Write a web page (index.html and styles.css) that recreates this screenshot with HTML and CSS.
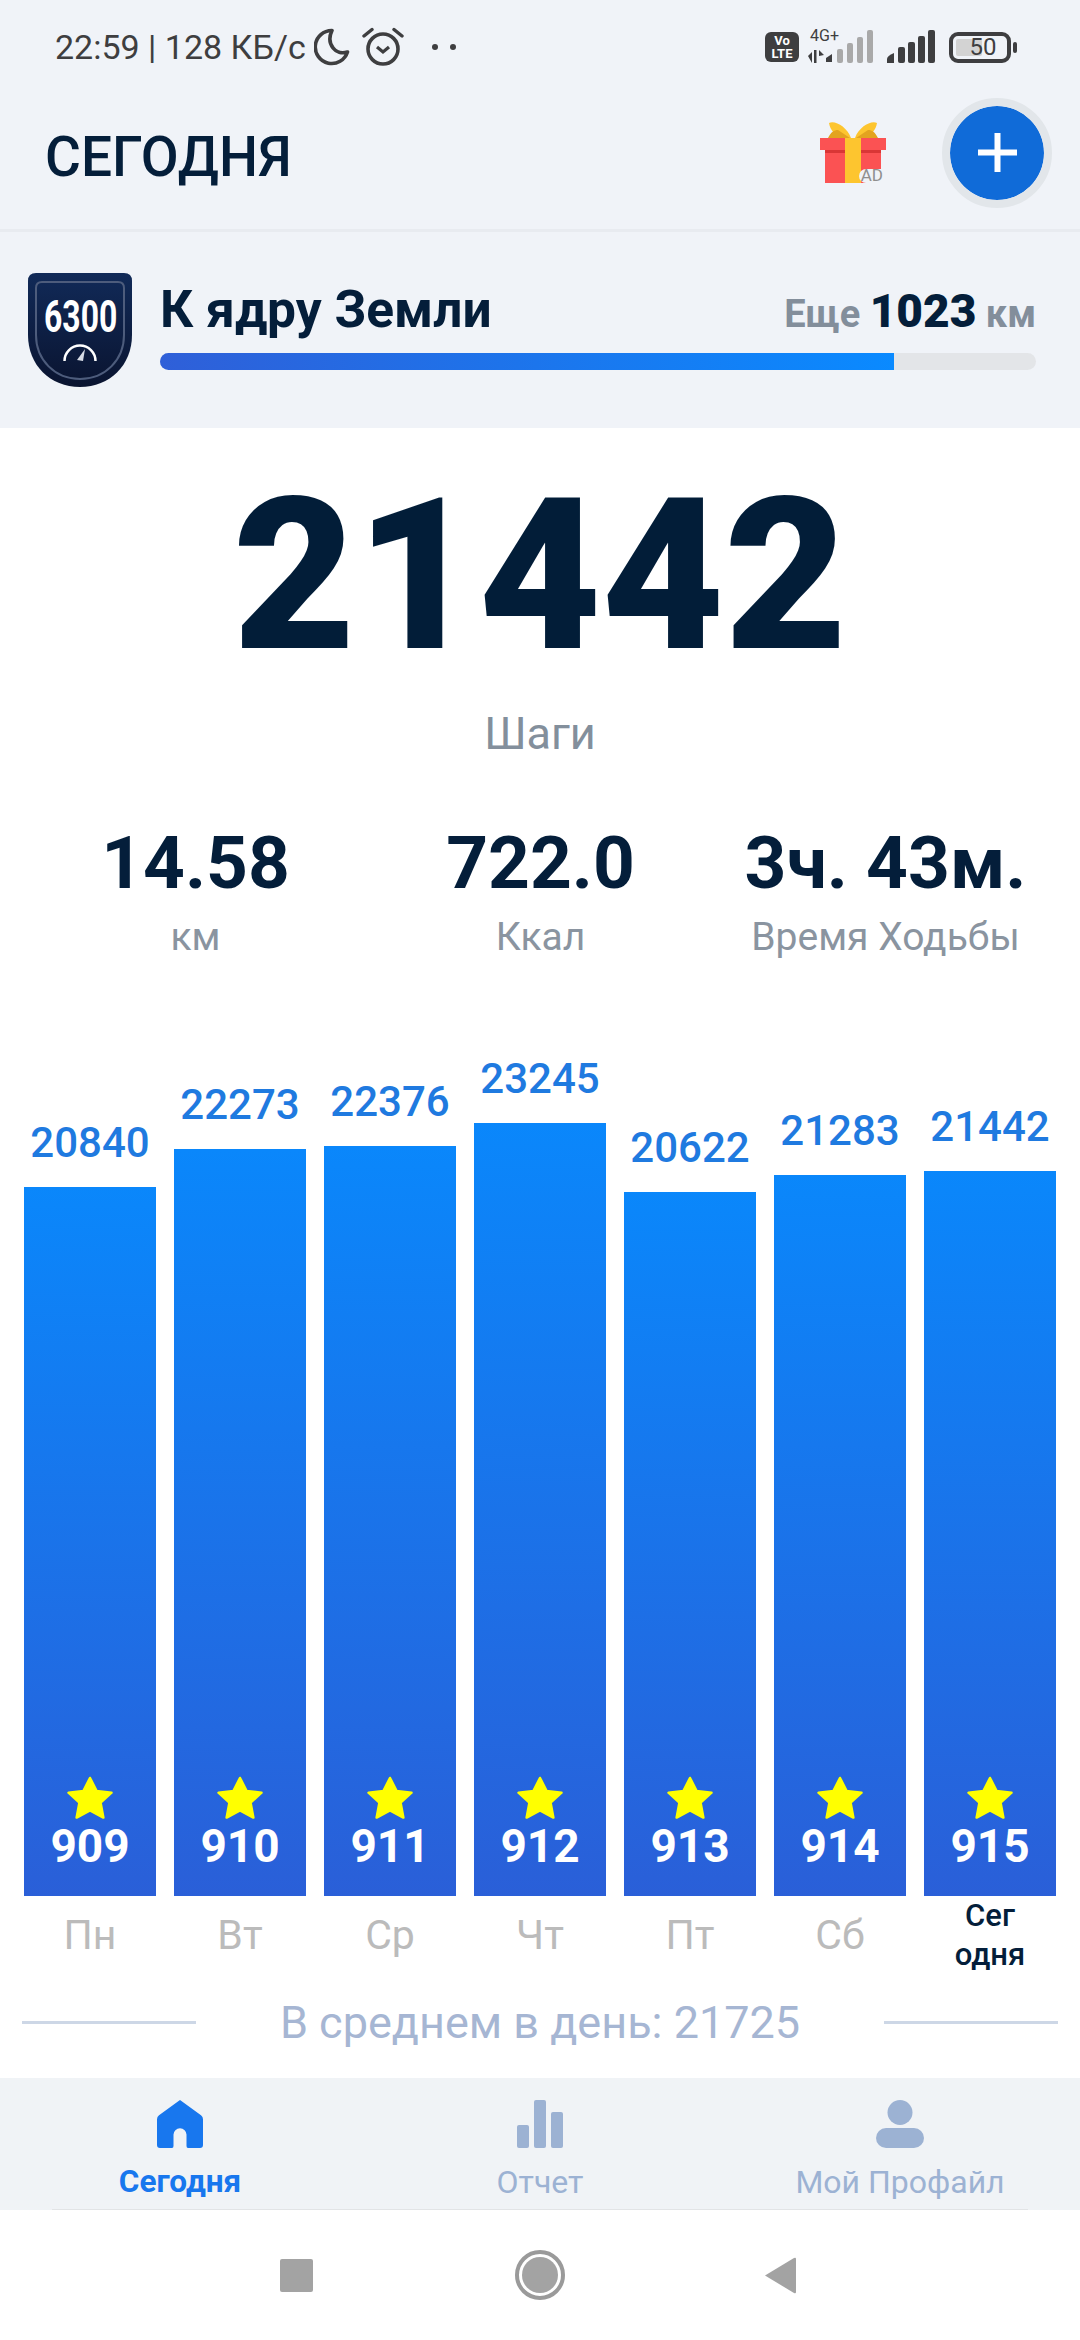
FILE: index.html
```html
<!DOCTYPE html>
<html lang="ru">
<head>
  <meta charset="UTF-8">
  <title>Сегодня</title>
  <link rel="stylesheet" href="styles.css">
</head>
<body>

<svg class="defs" width="0" height="0">
  <symbol id="star" viewBox="0 0 48 46" preserveAspectRatio="none">
    <polygon points="24,2 30.5,15.5 45.5,17.5 34.6,27.8 37.4,43.5 24,36 10.6,43.5 13.4,27.8 2.5,17.5 17.5,15.5" fill="#ffff00" stroke="#ffff00" stroke-width="2.5" stroke-linejoin="round"/>
  </symbol>
</svg>

<section class="top">
  <div class="status">
    <span class="status-text">22:59 | 128 КБ/с</span>
    <svg class="ic-moon" width="36" height="38" viewBox="0 0 36 38"><path d="M18 2.500A16.500 16.500 0 1 0 33.500 24C22 28 11.500 16 18 2.500Z" fill="none" stroke="#3e3e40" stroke-width="3.600" stroke-linejoin="round"/></svg>
    <svg class="ic-alarm" width="42" height="40" viewBox="0 0 42 40">
      <circle cx="21" cy="22" r="15" fill="none" stroke="#3e3e40" stroke-width="3.600"/>
      <path d="M15 20l6 5 6-5" fill="none" stroke="#3e3e40" stroke-width="3.200"/>
      <path d="M2 9l8-6.500M40 9l-8-6.500" fill="none" stroke="#3e3e40" stroke-width="3.400" stroke-linecap="round"/>
    </svg>
    <span class="dots"><i></i><i></i></span>
    <div class="status-right">
      <span class="volte">Vo<br>LTE</span>
      <svg class="ic-net" width="70" height="38" viewBox="0 -4 70 38">
        <text x="2" y="12" class="net-text">4G+</text>
        <path d="M0 27l4-4v11zM6 21h2.500v13H6zM11 21l5 5-5 1z" fill="#3e3e40"/>
        <path d="M18 33v-4l6-4v8z" fill="#3e3e40"/>
        <rect x="29" y="20" width="6" height="14" rx="2" fill="#a9a9a9"/>
        <rect x="39" y="14" width="6" height="20" rx="2" fill="#a9a9a9"/>
        <rect x="49" y="8" width="6" height="26" rx="2" fill="#a9a9a9"/>
        <rect x="59" y="1" width="6" height="33" rx="2" fill="#a9a9a9"/>
      </svg>
      <svg class="ic-signal" width="48" height="33" viewBox="0 0 48 33">
        <path d="M0 33v-4q0-3 7-6v10z" fill="#3e3e40"/>
        <rect x="11" y="17" width="7" height="16" rx="2" fill="#3e3e40"/>
        <rect x="21" y="12" width="7" height="21" rx="2" fill="#3e3e40"/>
        <rect x="31" y="6" width="7" height="27" rx="2" fill="#3e3e40"/>
        <rect x="41" y="0" width="7" height="33" rx="2" fill="#3e3e40"/>
      </svg>
      <span class="battery"><span class="battery-level"></span><span class="battery-num">50</span></span>
      <span class="battery-nub"></span>
    </div>
  </div>

  <header class="head">
    <h1>СЕГОДНЯ</h1>
    <span class="gift">
      <svg width="66" height="62" viewBox="0 0 66 62">
        <path d="M24 17C15 15 10 9 9 2c6-3 18 4 22 15zM42 17c9-2 14-8 15-15-6-3-18 4-22 15z" fill="#fdc52f"/>
        <path d="M8 17c3-6 6-8 10-8l12 8zM58 17c-3-6-6-8-10-8l-12 8z" fill="#e3a31f"/>
        <rect x="0" y="17" width="66" height="12" fill="#fb5253"/>
        <rect x="5" y="29" width="56" height="33" fill="#fb5253"/>
        <rect x="5" y="29" width="56" height="3" fill="#d93636"/>
        <rect x="25" y="17" width="16" height="45" fill="#fdc52f"/>
        <path d="M66 48H46a7 7 0 0 0 0 14H66z" fill="#f0f3f8"/>
      </svg>
      <span class="gift-ad">AD</span>
    </span>
    <button class="add"><svg width="39" height="39" viewBox="0 0 39 39"><path d="M19.500 0v39M0 19.500h39" stroke="#fff" stroke-width="6"/></svg></button>
  </header>

  <div class="goal">
    <svg class="badge" width="104" height="114" viewBox="0 0 104 114">
      <defs>
        <linearGradient id="badgefill" x1="0" y1="0" x2="0" y2="1">
          <stop offset="0" stop-color="#112a58"/>
          <stop offset="1" stop-color="#0a1430"/>
        </linearGradient>
      </defs>
      <path d="M8 0H96Q104 0 104 8V62C104 92 82 114 52 114S0 92 0 62V8Q0 0 8 0Z" fill="url(#badgefill)"/>
      <path d="M14 9H90Q96 9 96 15V62C96 87 77 106 52 106S8 87 8 62V15Q8 9 14 9Z" fill="none" stroke="#4d5c7c" stroke-width="2"/>
      <text transform="translate(16 59) scale(.71 1)" class="badge-num">6300</text>
      <path d="M36.500 88a15.500 15.500 0 0 1 31 0" fill="none" stroke="#fff" stroke-width="2.500"/>
      <path d="M49 87l8-11-2 12z" fill="#d8dde6"/>
    </svg>
    <div class="goal-main">
      <div class="goal-row">
        <span class="goal-title">К ядру Земли</span>
        <span class="goal-left">Еще <b>1023</b> км</span>
      </div>
      <div class="track"><div class="fill"></div></div>
    </div>
  </div>
</section>

<section class="hero">
  <div class="steps">21442</div>
  <div class="steps-label">Шаги</div>
</section>

<section class="stats">
  <div class="stat"><b>14.58</b><span>км</span></div>
  <div class="stat"><b>722.0</b><span>Ккал</span></div>
  <div class="stat"><b>3ч. 43м.</b><span>Время Ходьбы</span></div>
</section>

<section class="chart">
  <div class="col"><div class="val">20840</div><div class="bar" style="height:709px"><svg class="star"><use href="#star"/></svg><div class="num">909</div></div></div>
  <div class="col"><div class="val">22273</div><div class="bar" style="height:747px"><svg class="star"><use href="#star"/></svg><div class="num">910</div></div></div>
  <div class="col"><div class="val">22376</div><div class="bar" style="height:750px"><svg class="star"><use href="#star"/></svg><div class="num">911</div></div></div>
  <div class="col"><div class="val">23245</div><div class="bar" style="height:773px"><svg class="star"><use href="#star"/></svg><div class="num">912</div></div></div>
  <div class="col"><div class="val">20622</div><div class="bar" style="height:704px"><svg class="star"><use href="#star"/></svg><div class="num">913</div></div></div>
  <div class="col"><div class="val">21283</div><div class="bar" style="height:721px"><svg class="star"><use href="#star"/></svg><div class="num">914</div></div></div>
  <div class="col"><div class="val">21442</div><div class="bar" style="height:725px"><svg class="star"><use href="#star"/></svg><div class="num">915</div></div></div>
</section>

<section class="days">
  <div>Пн</div><div>Вт</div><div>Ср</div><div>Чт</div><div>Пт</div><div>Сб</div>
  <div class="today">Сег<br>одня</div>
</section>

<section class="avg">
  <i></i><span>В среднем в день: 21725</span><i></i>
</section>

<nav class="tabs">
  <a class="tab active">
    <svg width="46" height="48" viewBox="0 0 46 50" preserveAspectRatio="none"><path d="M23 0l21 16q2 1.500 2 4v27q0 3-3 3H31q-1.500 0-1.500-2V36a6.500 6.500 0 0 0-13 0v12q0 2-1.500 2H3q-3 0-3-3V20q0-2.500 2-4z" fill="#1877ee"/></svg>
    <span>Сегодня</span>
  </a>
  <a class="tab">
    <svg width="46" height="48" viewBox="0 0 46 48"><rect x="0" y="25" width="12" height="23" rx="2" fill="#9cb2d3"/><rect x="17" y="0" width="12" height="48" rx="2" fill="#9cb2d3"/><rect x="34" y="12" width="12" height="36" rx="2" fill="#9cb2d3"/></svg>
    <span>Отчет</span>
  </a>
  <a class="tab">
    <svg width="48" height="48" viewBox="0 0 48 48"><circle cx="24" cy="12.500" r="12.500" fill="#9cb2d3"/><rect x="0" y="28" width="48" height="20" rx="10" fill="#9cb2d3"/></svg>
    <span>Мой Профайл</span>
  </a>
</nav>

<footer class="sysnav">
  <svg class="sys-square" width="33" height="33" viewBox="0 0 33 33"><rect width="33" height="33" rx="2" fill="#a3a3a3"/></svg>
  <svg class="sys-home" width="50" height="50" viewBox="0 0 50 50"><circle cx="25" cy="25" r="23" fill="none" stroke="#9a9a9a" stroke-width="4"/><circle cx="25" cy="25" r="18" fill="#a3a3a3"/></svg>
  <svg class="sys-back" width="32" height="37" viewBox="0 0 32 37"><path d="M1 18.500L30 1q2-1 2 1v33q0 2-2 1z" fill="#a3a3a3"/></svg>
</footer>

</body>
</html>
```

FILE: styles.css
```css
* { box-sizing: border-box; }
body { margin: 0; width: 1080px; height: 2340px; overflow: hidden; background: #fff; font-family: Roboto, sans-serif; color: #041e3a; }
.defs { position: absolute; }

.top { height: 428px; background: #f0f3f8; }

.status { height: 90px; display: flex; align-items: center; padding: 0 63px 0 55px; color: #3e3e40; }
.status-text { font-size: 34px; margin-top: 3px; white-space: nowrap; }
.ic-moon { margin: 3px 0 0 8px; }
.ic-alarm { margin: 3px 0 0 12px; }
.dots { display: flex; gap: 12px; margin: 3px 0 0 28px; }
.dots i { width: 6px; height: 6px; border-radius: 50%; background: #3e3e40; }
.status-right { margin-left: auto; display: flex; align-items: flex-end; margin-top: -2px; }
.volte { width: 34px; height: 30px; margin-bottom: 1px; border-radius: 6px; background: #3e3e40; color: #fff; font-size: 13px; font-weight: 700; line-height: 13px; text-align: center; padding-top: 2px; }
.ic-net { margin-left: 9px; }
.net-text { font: 16px Roboto, sans-serif; fill: #3e3e40; }
.ic-signal { margin-left: 9px; }
.battery { position: relative; width: 62px; height: 31px; margin-left: 14px; border: 4px solid #3e3e40; border-radius: 9px; }
.battery-level { position: absolute; left: 3px; top: 3px; bottom: 3px; width: 26px; background: #d3d3d3; border-radius: 2px; }
.battery-num { position: relative; display: block; text-align: center; font-size: 24px; line-height: 23px; padding-left: 6px; }
.battery-nub { width: 4px; height: 11px; margin: 0 0 10px 2px; background: #3e3e40; border-radius: 2px; }

.head { height: 142px; display: flex; align-items: center; padding: 0 28px 0 45px; border-bottom: 3px solid #e8ebf0; }
.head h1 { margin: -6px 0 0; font-size: 55px; font-weight: 500; flex: 1; }
.gift { position: relative; width: 66px; height: 62px; margin-top: -16px; }
.gift svg { display: block; }
.gift-ad { position: absolute; right: 3px; bottom: -2px; font-size: 17px; line-height: 20px; color: #8f8f8f; }
.add { width: 110px; height: 110px; margin: -14px 0 0 56px; padding: 0; border: 8px solid #e2e6ea; border-radius: 50%; background: #106bd8; background-clip: padding-box; display: flex; align-items: center; justify-content: center; }

.goal { display: flex; padding: 41px 44px 0 28px; }
.badge { flex: none; }
.badge-num { font: 700 45px Roboto, sans-serif; fill: #fff; }
.goal-main { flex: 1; margin-left: 28px; }
.goal-row { display: flex; justify-content: space-between; align-items: baseline; height: 80px; padding-top: 6px; }
.goal-title { font-size: 51.5px; font-weight: 700; }
.goal-left { font-size: 38px; font-weight: 700; color: #838e9b; }
.goal-left b { font-size: 46px; color: #041e3a; }
.track { height: 17px; border-radius: 9px; background: #e3e5e8; overflow: hidden; }
.fill { width: 734px; height: 100%; background: linear-gradient(to right, #2f5fd8, #0a8aff); }

.hero { height: 390px; text-align: center; }
.steps { font-size: 212px; font-weight: 900; line-height: 220px; padding-top: 38px; color: #021d38; height: 281px; }
.steps-label { font-size: 45px; color: #838f9c; line-height: 50px; }

.stats { display: grid; grid-template-columns: repeat(3, 345px); padding-left: 23px; height: 178px; }
.stat { text-align: center; }
.stat b { display: block; font-size: 73px; line-height: 90px; }
.stat span { display: block; margin-top: 5px; font-size: 39px; line-height: 48px; color: #8a94a0; }

.chart { display: grid; grid-template-columns: repeat(7, 132px); gap: 18px; padding: 0 24px; height: 900px; align-items: end; }
.val { font-size: 42px; font-weight: 500; line-height: 50px; text-align: center; color: #1f7ae0; margin-bottom: 19px; }
.bar { display: flex; flex-direction: column; align-items: center; justify-content: flex-end; padding-bottom: 26px; background: linear-gradient(to bottom, #0a87fb, #2a5fd8); }
.star { width: 48px; height: 44px; margin-bottom: 2px; }
.num { font-size: 46px; font-weight: 700; line-height: 48px; color: #fff; }

.days { display: grid; grid-template-columns: repeat(7, 132px); gap: 18px; padding: 0 24px; height: 89px; text-align: center; font-size: 41px; line-height: 78px; color: #bbb; }
.days .today { font-size: 31px; font-weight: 500; line-height: 39px; color: #041e3a; }

.avg { height: 93px; display: flex; align-items: center; justify-content: space-between; padding: 0 22px 18px; font-size: 45px; color: #a6b6d3; }
.avg i { width: 174px; height: 3px; background: #cdd7e6; }

.tabs { height: 132px; display: grid; grid-template-columns: repeat(3, 360px); background: #f0f3f6; position: relative; }
.tabs::after { content: ""; position: absolute; left: 52px; right: 52px; bottom: 0; height: 1px; background: #e2e4e6; }
.tab { display: flex; flex-direction: column; align-items: center; padding-top: 22px; font-size: 32px; line-height: 36px; color: #9cb2d3; }
.tab span { margin-top: 16px; }
.tab.active { color: #1877ee; font-weight: 700; font-size: 31.5px; }

.sysnav { height: 130px; display: flex; align-items: center; padding-left: 280px; }
.sys-home { margin-left: 202px; }
.sys-back { margin-left: 199px; }
```
